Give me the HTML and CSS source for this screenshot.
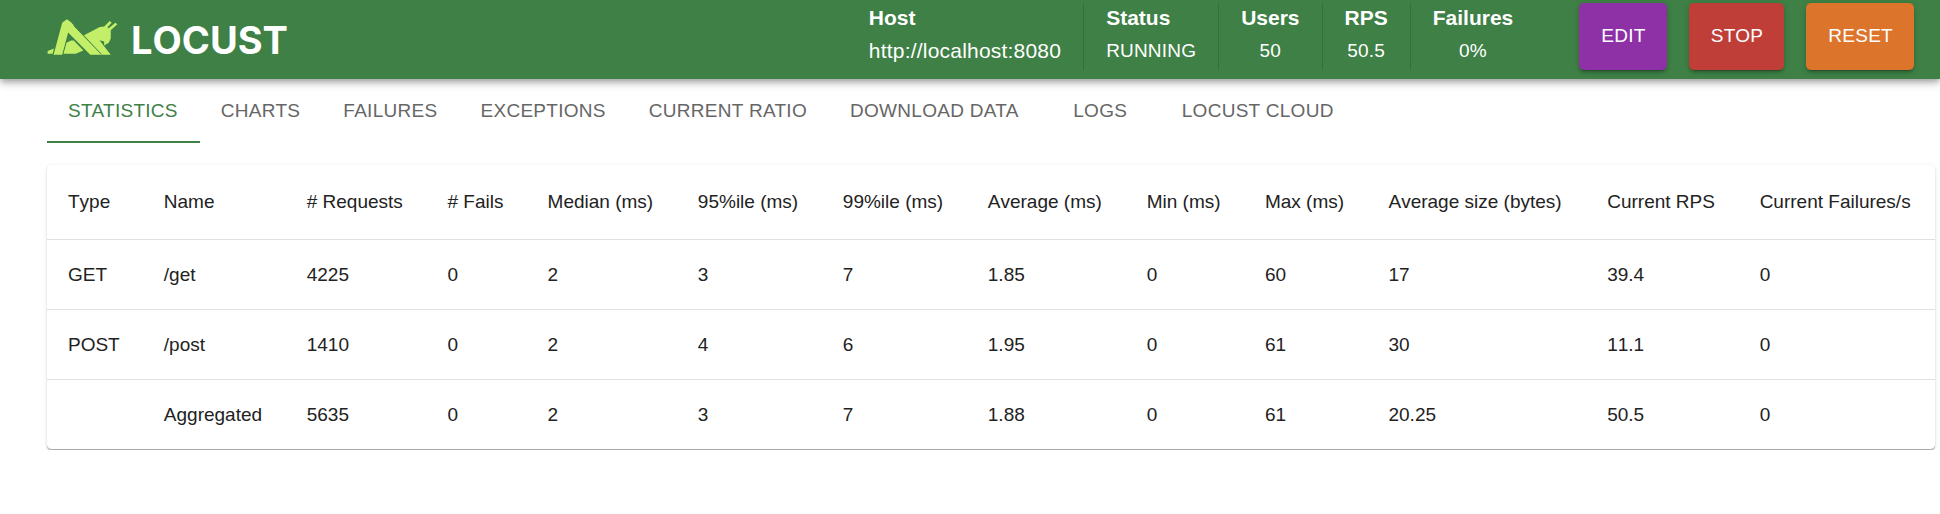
FILE: index.html
```html
<!DOCTYPE html>
<html lang="en">
<head>
<meta charset="utf-8">
<title>Locust</title>
<link rel="stylesheet" href="styles.css">
</head>
<body>
<header class="topbar">
  <a class="brand" href="#">
    <svg class="brand-mark" viewBox="50 54 213 109" aria-hidden="true">
      <path d="M51 151L70 143L66 159H51Z"/>
      <path d="M99 159L108 126L122 119H130L159 149L136 159Z"/>
      <path d="M161 103L209 78L222 77L239 60L245 65L232 79L236 82L256 65L262 70L242 88V113L236 126L222 134V122L208 118L242 162H214Z"/>
      <path d="M69 162L95 65L109 55L120 62L216 162H180L113 95L95 162Z"/>
      <path class="brand-cut" d="M130 74L214 161"/>
    </svg>
    <span class="brand-name">LOCUST</span>
  </a>
  <div class="status">
    <dl class="stats">
      <div class="stat stat-host"><dt>Host</dt><dd>http://localhost:8080</dd></div>
      <div class="stat stat-state"><dt>Status</dt><dd>RUNNING</dd></div>
      <div class="stat"><dt>Users</dt><dd>50</dd></div>
      <div class="stat"><dt>RPS</dt><dd>50.5</dd></div>
      <div class="stat"><dt>Failures</dt><dd>0%</dd></div>
    </dl>
    <div class="actions">
      <button class="button button-edit" type="button">EDIT</button>
      <button class="button button-stop" type="button">STOP</button>
      <button class="button button-reset" type="button">RESET</button>
    </div>
  </div>
</header>
<main class="content">
  <div class="tabs" role="tablist">
    <button class="tab tab-active" type="button" role="tab" aria-selected="true">STATISTICS</button>
    <button class="tab" type="button" role="tab">CHARTS</button>
    <button class="tab" type="button" role="tab">FAILURES</button>
    <button class="tab" type="button" role="tab">EXCEPTIONS</button>
    <button class="tab" type="button" role="tab">CURRENT RATIO</button>
    <button class="tab" type="button" role="tab">DOWNLOAD DATA</button>
    <button class="tab" type="button" role="tab">LOGS</button>
    <button class="tab" type="button" role="tab">LOCUST CLOUD</button>
  </div>
  <div class="card">
    <table class="table">
      <thead>
        <tr><th>Type</th><th>Name</th><th># Requests</th><th># Fails</th><th>Median (ms)</th><th>95%ile (ms)</th><th>99%ile (ms)</th><th>Average (ms)</th><th>Min (ms)</th><th>Max (ms)</th><th>Average size (bytes)</th><th>Current RPS</th><th>Current Failures/s</th></tr>
      </thead>
      <tbody>
        <tr><td>GET</td><td>/get</td><td>4225</td><td>0</td><td>2</td><td>3</td><td>7</td><td>1.85</td><td>0</td><td>60</td><td>17</td><td>39.4</td><td>0</td></tr>
        <tr><td>POST</td><td>/post</td><td>1410</td><td>0</td><td>2</td><td>4</td><td>6</td><td>1.95</td><td>0</td><td>61</td><td>30</td><td>11.1</td><td>0</td></tr>
        <tr><td></td><td>Aggregated</td><td>5635</td><td>0</td><td>2</td><td>3</td><td>7</td><td>1.88</td><td>0</td><td>61</td><td>20.25</td><td>50.5</td><td>0</td></tr>
      </tbody>
    </table>
  </div>
</main>
</body>
</html>
```
FILE: styles.css
```css
* {
  box-sizing: border-box;
}

body {
  margin: 0;
  background: #fff;
  color: #222;
  font-family: "Liberation Sans", Arial, sans-serif;
  font-size: 19px;
}

button {
  border: 0;
  font: inherit;
  letter-spacing: 0.015em;
  cursor: pointer;
}

.topbar {
  display: flex;
  align-items: center;
  justify-content: space-between;
  padding: 3px 26px 9px 47px;
  background: #3e8045;
  color: #fff;
  box-shadow: 0 3px 5px -1px rgba(0, 0, 0, 0.2), 0 5px 7px rgba(0, 0, 0, 0.14), 0 1px 13px rgba(0, 0, 0, 0.12);
}

.brand {
  display: flex;
  align-items: center;
  gap: 13px;
  color: inherit;
  text-decoration: none;
}

.brand-mark {
  width: 71px;
  height: 36px;
  fill: #c3ef68;
}

.brand-cut {
  fill: none;
  stroke: #3e8045;
  stroke-width: 3;
}

.brand-name {
  padding-top: 7px;
  font-family: Inter, "Liberation Sans", sans-serif;
  font-size: 38px;
  font-weight: 700;
  font-kerning: none;
  line-height: 40px;
}

.status {
  display: flex;
  gap: 44px;
}

.stats {
  display: flex;
  margin: 0;
  font-kerning: none;
}

.stat {
  display: flex;
  flex-direction: column;
  align-items: center;
  padding: 0 22px;
  border-left: 1px solid #33703a;
}

.stat-host {
  border-left: 0;
}

.stat-host,
.stat-state {
  align-items: flex-start;
}

.stat dt {
  font-size: 21px;
  font-weight: 700;
  line-height: 30px;
}

.stat dd {
  margin: 0;
  line-height: 35px;
  letter-spacing: 0.01em;
}

.stat-host dd {
  font-size: 21px;
}

.actions {
  display: flex;
  gap: 22px;
}

.button {
  min-height: 67px;
  padding: 0 21px 2px 22px;
  border-radius: 5px;
  color: #fff;
  box-shadow: 0 4px 1px -3px rgba(0, 0, 0, 0.2), 0 3px 3px rgba(0, 0, 0, 0.14), 0 1px 7px rgba(0, 0, 0, 0.12);
}

.button-edit {
  background: #8e31a7;
}

.button-stop {
  background: #c03e38;
}

.button-reset {
  background: #dd742c;
}

.content {
  padding: 0 5px 0 47px;
}

.tabs {
  display: flex;
}

.tab {
  min-width: 120px;
  height: 64px;
  padding: 2px 22px 0 21px;
  border-bottom: 2px solid transparent;
  background: none;
  color: #666;
}

.tab-active {
  border-bottom-color: #3e8045;
  color: #3e8045;
}

.card {
  margin-top: 22px;
  border-bottom: 1px solid #aaa;
  border-radius: 5px;
  box-shadow: 0 1px 1px rgba(0, 0, 0, 0.25), 0 1px 4px rgba(0, 0, 0, 0.12);
}

.table {
  width: 100%;
  border-collapse: collapse;
  font-kerning: none;
}

.table th,
.table td {
  padding: 22px 22px 22px 21px;
  font-weight: 400;
  line-height: 25px;
  text-align: left;
  white-space: nowrap;
}

.table th {
  padding-top: 24px;
  padding-bottom: 25px;
}

.table tbody tr {
  border-top: 1px solid #e0e0e0;
}
```
